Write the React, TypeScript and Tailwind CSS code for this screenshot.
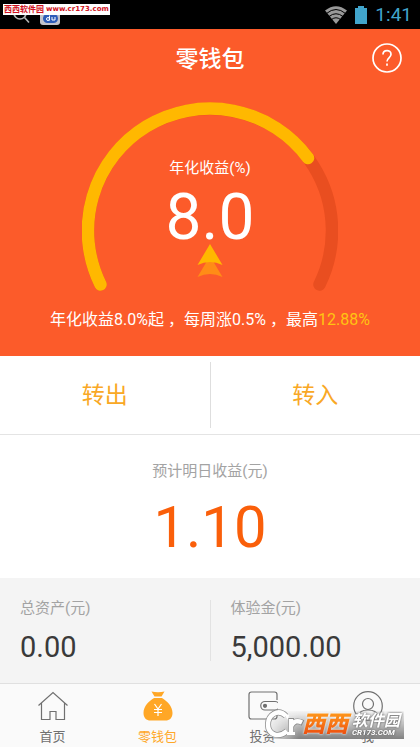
import type { ReactNode } from "react";

const YELLOW = "#ffb800";

function StatusBar() {
  return (
    <div className="relative flex h-[29px] items-center justify-end bg-black pr-2 text-[#41a5cc]">
      <div className="absolute left-3 top-1 flex items-start gap-2">
        <svg className="h-[20px] w-5" viewBox="0 0 20 20" fill="none" stroke="#b5b5b5" strokeWidth="1.600">
          <circle cx="8" cy="9" r="6" />
          <path d="M12.500 13.500l4.500 5" />
        </svg>
        <svg className="h-[21px] w-5" viewBox="0 0 20 21">
          <rect width="20" height="21" rx="3" fill="#c3c3cb" />
          <rect x="3" y="10" width="15" height="9" rx="4.500" fill="#2e5cb8" />
          <circle cx="8" cy="15" r="1.500" fill="none" stroke="#fff" />
          <path d="M9.500 11.500v5M12 13v3h3v-3" fill="none" stroke="#fff" />
        </svg>
      </div>
      <a
        href="#source"
        className="absolute left-[3px] top-1 flex h-[11px] items-center gap-0.5 bg-white px-px text-[8px] leading-none font-bold text-[#cf1020]"
      >
        <span>西西软件园</span>
        <span className="font-['DejaVu_Sans',sans-serif] text-[7px]">www.cr173.com</span>
      </a>
      <svg className="mr-2 h-[18px] w-[22px]" viewBox="0 0 22 18" fill="none">
        <path d="M11 18L0 4.500Q11-4 22 4.500z" fill="#999" />
        <path d="M1.500 7.500Q11-.5 20.500 7.500M4 10.500Q11 5 18 10.500M6.500 13.500Q11 10 15.500 13.500" stroke="#000" />
      </svg>
      <svg className="mr-2 h-[18px] w-3" viewBox="0 0 12 18" fill="currentColor">
        <path d="M3 0h6v2h3v16H0V2h3z" />
      </svg>
      <span className="text-[19px] leading-none">1:41</span>
    </div>
  );
}

function Gauge() {
  return (
    <div className="relative mx-auto h-[190px] w-[256px]">
      <svg
        className="absolute inset-0 h-full w-full"
        viewBox="0 0 256 190"
        fill="none"
        strokeWidth="12.500"
        strokeLinecap="round"
      >
        <path d="M18.500 182.500A122 122 0 1 1 237.500 182.500" stroke="#e94e20" />
        <path d="M18.500 182.500A122 122 0 0 1 226 56" stroke={YELLOW} />
      </svg>
      <div className="relative flex flex-col items-center pt-[54px] text-white">
        <p className="text-[15px] leading-6">年化收益(%)</p>
        <p className="text-[64px] leading-[76px]">8.0</p>
        <svg className="-mt-3 h-[33px] w-[26px]" viewBox="0 0 26 33">
          <path d="M13 12l12.500 21Q13 27 .5 33z" fill="#ff8c16" />
          <path d="M13 0l12.500 21Q13 15 .5 21z" fill={YELLOW} />
        </svg>
      </div>
    </div>
  );
}

// full-width comma with a little air before it
function Comma() {
  return <span className="pl-1">，</span>;
}

function Hero() {
  return (
    <section className="h-[327px] bg-[#fc5b2a] text-white">
      <header className="relative flex h-[58px] items-center justify-center">
        <h1 className="pt-1 text-[23px] leading-8 font-medium">零钱包</h1>
        <button type="button" aria-label="帮助" className="absolute right-[18px]">
          <svg className="h-[30px] w-[30px]" viewBox="0 0 30 30" fill="none" stroke="currentColor" strokeWidth="1.700">
            <circle cx="15" cy="15" r="14" />
            <path d="M11 11.500c0-5.200 8-5.200 8-.3 0 3.600-4 3.600-4 7.300M15 20.500v2.200" />
          </svg>
        </button>
      </header>
      <div className="pt-[15px]">
        <Gauge />
      </div>
      <p className="mt-4 text-center text-[16px] leading-6 whitespace-nowrap">
        年化收益8.0%起<Comma />每周涨0.5%<Comma />最高
        <span className="text-[#ffc412]">12.88%</span>
      </p>
    </section>
  );
}

function Stat({ label, value }: { label: string; value: string }) {
  return (
    <div className="flex-1 pl-5">
      <dt className="text-[15px] leading-6 text-[#a3a3a3]">{label}</dt>
      <dd className="mt-1 text-[29px] leading-[46px] text-[#3a3a3a]">{value}</dd>
    </div>
  );
}

interface TabProps {
  label: string;
  active?: boolean;
  children: ReactNode;
}

function Tab({ label, active, children }: TabProps) {
  return (
    <a
      href="#tab"
      aria-current={active ? "page" : undefined}
      className={`flex flex-1 flex-col items-center pt-[7px] text-[13px] leading-5 ${
        active ? "text-[#ffa726]" : "text-[#707070]"
      }`}
    >
      <svg className="mb-1.5 h-[30px] w-[30px]" viewBox="0 0 30 30" fill="none" stroke="currentColor" strokeWidth="1.200">
        {children}
      </svg>
      {label}
    </a>
  );
}

function Watermark() {
  return (
    <div className="absolute right-4 bottom-2 flex h-7 w-[140px] items-center">
      <div className="absolute inset-0 bg-linear-to-b from-[#cccccc]/10 to-[#808080] [mask-image:linear-gradient(to_right,transparent,black_25%)]" />
      <svg className="absolute bottom-0 left-0 h-[30px] w-[42px]" viewBox="0 0 42 30" fill="none">
        <g stroke="#8a8a8a" strokeWidth="6">
          <path d="M22 7C14-1 4 6 4 15.500S14 30 23 22" />
          <path d="M27 9v16M27 17c3-5 6-6 12-3" />
        </g>
        <g stroke="#fff" strokeWidth="4.500">
          <path d="M22 7C14-1 4 6 4 15.500S14 30 23 22" />
          <path d="M27 10v14M27 17c3-5 6-6 11-3.500" />
        </g>
        <path d="M20 5l5 1-1 5zM23 23h8v3h-8z" fill="#fff" />
      </svg>
      <span className="relative ml-[38px] bg-linear-to-b from-[#ff9d1c] to-[#e8380d] bg-clip-text pr-1 text-[23px] leading-7 font-black text-transparent italic drop-shadow-[0_0_1px_white]">
        西西
      </span>
      <span className="relative flex flex-col text-white drop-shadow-[0_0_1px_#555]">
        <span className="text-[16px] leading-4 font-bold italic">软件园</span>
        <span className="text-[8px] leading-2 font-bold italic">CR173.COM</span>
      </span>
    </div>
  );
}

export default function App() {
  return (
    <div className="relative flex min-h-screen flex-col bg-white font-['Roboto','Noto_Sans_CJK_SC',sans-serif]">
      <StatusBar />
      <main>
        <Hero />
        <div className="flex h-[79px] border-b border-[#e4e4e4] py-1.5 text-[23px] text-[#f9a825]">
          <button type="button" className="flex-1 border-r border-[#dedede] pt-0.5">
            转出
          </button>
          <button type="button" className="flex-1 pt-0.5">
            转入
          </button>
        </div>
        <section className="flex h-[143px] flex-col items-center pt-6">
          <h2 className="text-[15px] leading-6 text-[#a3a3a3]">预计明日收益(元)</h2>
          <p className="mt-2 text-[58px] leading-[72px] text-[#fa5f0a]">1.10</p>
        </section>
        <dl className="flex h-[105px] items-start bg-[#f4f4f4] pt-[18px]">
          <Stat label="总资产(元)" value="0.00" />
          <div className="mt-1 h-[61px] w-px bg-[#e2e2e2]" />
          <Stat label="体验金(元)" value="5,000.00" />
        </dl>
      </main>
      <nav className="flex flex-1 border-t border-[#e0e0e0] bg-[#fafafa]">
        <Tab label="首页">
          <path d="M.5 14.500L15 1.500l14.500 13M3.500 12v16.500h8.500v-8h6v8h8.500V12" />
        </Tab>
        <Tab label="零钱包" active>
          <path
            d="M8.500 .5q6.500 1.500 13 0l-3 5h-7zM11 7h8C24 10 29.500 15 29.500 22c0 5-3 7.500-7 7.500h-15c-4 0-7-2.500-7-7.500C.5 15 6 10 11 7z"
            fill="currentColor"
            stroke="none"
          />
          <path d="M11.500 13l3.500 5 3.500-5M11 18.500h8M11 21.500h8M15 18v7" stroke="#fff" />
        </Tab>
        <Tab label="投资">
          <path d="M29 9V3.500q0-2.500-2.500-2.500h-23Q1 1 1 3.500v22Q1 28 3.500 28h23q2.500 0 2.500-2.500V20M27 10.500H17a4 4 0 0 0 0 8.500h10a4 4 0 0 0 0-8.500z" />
          <circle cx="17" cy="14.800" r="1.500" fill="currentColor" />
        </Tab>
        <Tab label="我">
          <circle cx="15" cy="15" r="14.300" />
          <circle cx="15" cy="13" r="5.500" />
          <path d="M5 25c2-8 18-8 20 0" />
        </Tab>
      </nav>
      <Watermark />
    </div>
  );
}
